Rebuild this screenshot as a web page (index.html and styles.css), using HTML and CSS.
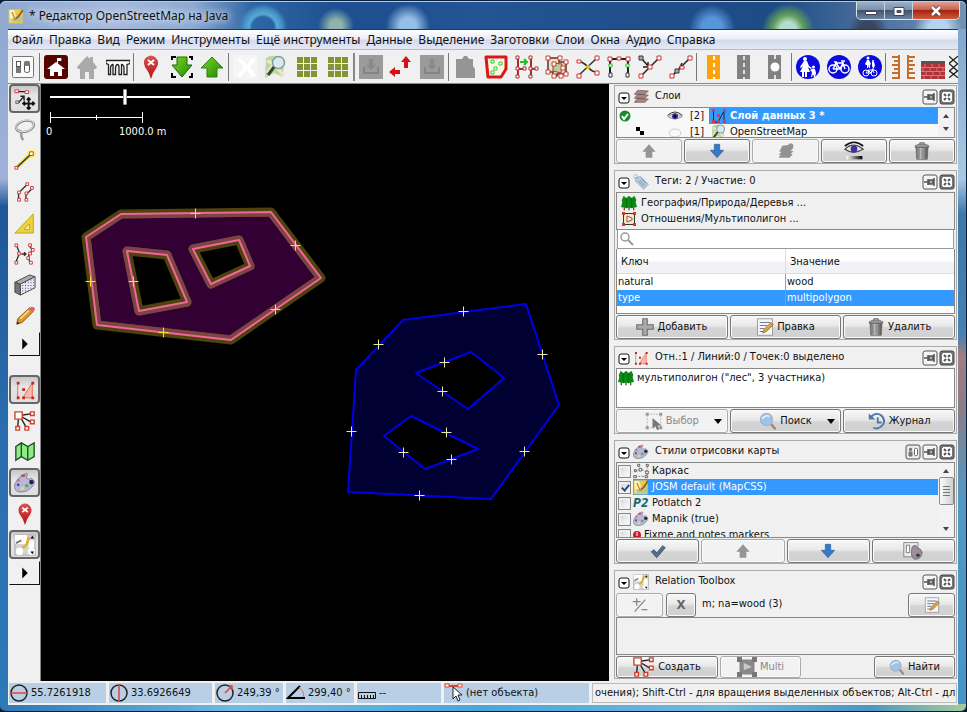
FILE: index.html
```html
<!DOCTYPE html>
<html lang="ru">
<head>
<meta charset="utf-8">
<title>Редактор OpenStreetMap на Java</title>
<link rel="stylesheet" href="styles.css">
</head>
<body>
<svg class="defs" aria-hidden="true">
  <defs>
    <linearGradient id="gGreen" x1="0" y1="0" x2="1" y2="1"><stop offset="0" stop-color="#7fd42a"/><stop offset="1" stop-color="#1f8a00"/></linearGradient>
    <linearGradient id="gRed" x1="0" y1="0" x2="0" y2="1"><stop offset="0" stop-color="#d85252"/><stop offset="1" stop-color="#b81414"/></linearGradient>
    <linearGradient id="gGray" x1="0" y1="0" x2="1" y2="0"><stop offset="0" stop-color="#666"/><stop offset=".4" stop-color="#c4c4c4"/><stop offset="1" stop-color="#4c4c4c"/></linearGradient>
    <linearGradient id="gFade" x1="0" y1="0" x2="1" y2="0"><stop offset="0" stop-color="#fff"/><stop offset="1" stop-color="#000"/></linearGradient>
    <pattern id="dots" width="3" height="3" patternUnits="userSpaceOnUse"><rect width="3" height="3" fill="#e6e8f6"/><rect width="1" height="1" fill="#33375c"/></pattern>
  </defs>
  <symbol id="prefs" viewBox="0 0 24 24"><rect x="1.500" y="1.500" width="21" height="21" rx="1" fill="#fafafa" stroke="#777"/><rect x="5.500" y="6.500" width="4" height="5" fill="#fff" stroke="#555"/><rect x="5" y="12" width="5" height="6" fill="#777"/><rect x="13.500" y="6.500" width="5" height="11" rx="2" fill="#fff" stroke="#555"/><rect x="13" y="6" width="6" height="5" rx="2" fill="#777"/></symbol>
  <symbol id="home" viewBox="0 0 24 24"><rect width="24" height="24" rx="3" fill="#560400"/><path d="M3 14 12 7l9 7h-3v7h-4v-4h-4v4H6v-7z" fill="#fff"/><path d="M13.500 9V3M14 3.500h3v2h-3z" fill="#fff" stroke="#fff"/></symbol>
  <symbol id="house" viewBox="0 0 24 24"><path d="m2 12 10-11 3 3V2h3v5l4 5-1 2h-2v10h-5v-7h-4v7H5V14H3z" fill="#aaa"/></symbol>
  <symbol id="bridge" viewBox="0 0 24 24"><path d="M0 5.500h24v3l-3 1v10h-3v-7q-.500-3-2.500-3v10h-2.500v-7q0-3-1.500-3T9.500 12.500v7H7v-10q-2 0-2.500 3v7h-2v-10L0 8.500z" fill="#fff" stroke="#222" stroke-width="1.300"/></symbol>
  <symbol id="pin" viewBox="0 0 24 24"><path d="M12 24Q10 17 6 12Q3 5 8 2q4-3 8 0 5 4 2 10-4 5-6 12z" fill="url(#gRed)"/><path d="m9 5 6 5m0-5-6 5" stroke="#fff" stroke-width="2"/></symbol>
  <symbol id="download" viewBox="0 0 24 24"><path d="M7 2h10v8h5L12 22 2 10h5z" fill="url(#gGreen)" stroke="#1d6b08"/><path d="M2 5V2h4M19 2h3v3M2 18v4h4M19 22h3v-4" fill="none" stroke="#000" stroke-width="2"/></symbol>
  <symbol id="upload" viewBox="0 0 24 24"><path d="M7 22h10v-9h6L12 2 1 13h6z" fill="url(#gGreen)" stroke="#2b8010"/></symbol>
  <symbol id="nox" viewBox="0 0 24 24"><rect width="24" height="24" fill="#f5f5f5"/><path d="m3 4 7 1 4 5 5-7 4 1-6 8 6 9-4 1-6-7-5 7-5-1 8-9z" fill="#fff"/></symbol>
  <symbol id="mapsearch" viewBox="0 0 24 24"><path d="M2 3q6-4 13-1l5 3-1 17-9-4-9 5z" fill="#b9d8a5"/><path d="M3 18 10 9l10 12M3 6l8 3" stroke="#f4e6bf" stroke-width="3" fill="none"/><circle cx="14.500" cy="7.500" r="6" fill="#dcefff" fill-opacity=".8" stroke="#839aa2" stroke-width="1.500"/><path d="m10 12-6 8" stroke="#3d462f" stroke-width="3"/></symbol>
  <symbol id="grid" viewBox="0 0 24 24"><path d="M2 2h6v6H2zm7 0h6v6H9zm7 0h6v6h-6zM2 9h6v6H2zm7 0h6v6H9zm7 0h6v6h-6zM2 16h6v6H2zm7 0h6v6H9zm7 0h6v6h-6z" fill="#839431"/></symbol>
  <symbol id="disk" viewBox="0 0 24 24"><rect width="24" height="24" fill="#9b9b9b"/><path d="M10 4h4v6h3l-5 5-5-5h3z" fill="#8a8a8a"/><path d="M5 12v6h14v-6" fill="none" stroke="#858585" stroke-width="2"/></symbol>
  <symbol id="updown" viewBox="0 0 24 24"><path d="m0 17 6-5v3h5v4H6v3zM17 1l5 6h-3v6h-4V7h-3z" fill="#d41118"/></symbol>
  <symbol id="paste" viewBox="0 0 24 24"><path d="M3 4h6l2-3h3l2 3h4v7l2 3v9H3z" fill="#959595"/></symbol>
  <symbol id="area" viewBox="0 0 24 24"><path d="M2 2h20v12l-5 8H4z" fill="#fff6e8" stroke="#dc1717" stroke-width="3" stroke-linejoin="round"/><path d="M7 5h3v3H7zm8 2h3v3h-3zm-5 5h3v3h-3zm-3 4h3v3H7z" fill="#fff" stroke="#22d322"/></symbol>
  <symbol id="split" viewBox="0 0 24 24"><path d="M3 3v18M16 3v18M3 14h7M16 14h6" stroke="#b32626" stroke-width="2"/><path d="M5 7h7m-3-3 3 3-3 3" stroke="#27bf27" fill="none" stroke-width="2"/><path d="M1 1h3v3H1zm13 0h3v3h-3zM1 12h3v3H1zm7 0h3v3H8zm6 0h3v3h-3zm6 0h3v3h-3zM1 20h3v3H1zm13 0h3v3h-3z" fill="#fff" stroke="#a33"/></symbol>
  <symbol id="multi" viewBox="0 0 24 24"><path d="M3 3h11v4h7v12h-9v2H8v-4H3z" fill="#efe0cc" stroke="#56352a" stroke-width="1.500"/><path d="m8 8 9 1-1 9-8-2z" fill="#b9cf9e" stroke="#b7301d"/><path d="M1 1h4v4H1zm12 0h4v4h-4zm6 4h4v4h-4zM1 15h4v4H1zm6-8h4v4H7zm9 4h4v4h-4zm3 6h4v4h-4zM7 19h4v4H7zm7 0h4v4h-4z" fill="#fff" stroke="#c4412e"/></symbol>
  <symbol id="mp" viewBox="0 0 16 16"><rect x="2.500" y="2.500" width="11" height="11" fill="#f5e6c8" stroke="#333"/><path d="M6 5v6l5-2V7z" fill="#f1f1e6" stroke="#a5503c"/><path d="M1 1h3v3H1zm11 0h3v3h-3zM1 12h3v3H1zm11 0h3v3h-3z" fill="#c4412e"/></symbol>
  <symbol id="cross" viewBox="0 0 24 24"><path d="M3 6q7 3 10 7t8 4M3 20l18-17" stroke="#333" fill="none" stroke-width="1.500"/><path d="M1 5h4v3H1zm18-4h4v4h-4zM1 19h4v4H1zm18-3h4v4h-4z" fill="#fff" stroke="#c33"/><circle cx="12" cy="12" r="2" fill="#f4bc13"/></symbol>
  <symbol id="ortho" viewBox="0 0 24 24"><path d="M3 19V4h18v15" stroke="#222" fill="none" stroke-width="2"/><path d="M1 2h4v4H1zm9 0h4v3h-4zm9 0h4v4h-4z" fill="#fff" stroke="#c33"/><path d="M2 9h3v3H2zm17 0h3v3h-3z" fill="#fff" stroke="#28b828"/><path d="M2 18h3v4H2zm17 0h3v4h-3z" fill="#fff" stroke="#333"/></symbol>
  <symbol id="joinpt" viewBox="0 0 24 24"><path d="M3 21 21 3M4 4l6 7m0-4v5H5" stroke="#222" fill="none" stroke-width="1.500"/><path d="M1 19h4v4H1zM19 1h4v4h-4zm-9 9h4v4h-4z" fill="#fff" stroke="#c33"/><path d="M1 1h4v4H1z" fill="#aaa" stroke="#333"/></symbol>
  <symbol id="onway" viewBox="0 0 24 24"><path d="M3 21 21 3M13 8l-3 6" stroke="#222" fill="none" stroke-width="1.500"/><path d="M1 19h4v4H1zM19 1h4v4h-4zM11 11h4v3h-4z" fill="#fff" stroke="#c33"/><path d="M6 14h4v4H6z" fill="#aaa" stroke="#333"/></symbol>
  <symbol id="road1" viewBox="0 0 24 24"><path d="M5 0h13v24H5z" fill="#ffa10b"/><path d="M12 1v4m0 3v4m0 3v4m0 3v2" stroke="#fff" stroke-width="2"/></symbol>
  <symbol id="road2" viewBox="0 0 24 24"><path d="M5 0h13v24H5z" fill="#818181"/><path d="M12 1v4m0 3v4m0 3v4m0 3v2" stroke="#fff" stroke-width="1.500"/></symbol>
  <symbol id="road3" viewBox="0 0 24 24"><path d="M5 0h13v24H5z" fill="#818181"/><path d="M12 0v4m0 16v4" stroke="#fff" stroke-width="1.500"/><circle cx="12" cy="12" r="4.500" fill="#fff"/></symbol>
  <symbol id="walk" viewBox="0 0 24 24"><circle cx="12" cy="12" r="12" fill="#0b0be0"/><circle cx="9" cy="4" r="2" fill="#fff"/><path d="M8 6h3l2 5 3 2-1 1-3-2 2 5h-3v5H9v-5H8v5H6v-5H4l3-6-2 2-1-1z" fill="#fff"/><circle cx="17.500" cy="12" r="1.500" fill="#fff"/><path d="M16 14h3l1 4-1 4h-1l-1-3-1 3h-1l1-5-2-2z" fill="#fff"/></symbol>
  <symbol id="bike" viewBox="0 0 24 24"><circle cx="12" cy="12" r="12" fill="#0b0be0"/><g fill="none" stroke="#fff" stroke-width="1.500"><circle cx="6" cy="14" r="4"/><circle cx="18" cy="14" r="4"/><path d="m6 14 3-6 4 6H6m7 0 3-6H9M7 7h3m8 7-3-8h3"/></g></symbol>
  <symbol id="bikewalk" viewBox="0 0 24 24"><circle cx="12" cy="12" r="12" fill="#0b0be0"/><g fill="#fff"><circle cx="10" cy="3" r="1.500"/><path d="M9 5h2l2 4-1 1v3h-1v-3l-1 3H9v-3H8l-1-1z"/><circle cx="15" cy="6" r="1"/><path d="M14 7h2l1 3-1 3h-1l-1-2z"/></g><g fill="none" stroke="#fff"><circle cx="8" cy="18" r="3"/><circle cx="16" cy="18" r="3"/><path d="m8 18 2-3 3 3H8m5 0 2-3h-5m6 3-2-4h2"/></g></symbol>
  <symbol id="rail" viewBox="0 0 24 24"><path d="M8 0v24M1 2h7M3 6h5M1 10h7M3 14h5M1 18h7M1 23h7M17 0v24M17 2h7M17 6h5M17 10h7M17 14h5M17 18h7M17 23h7" stroke="#c76d2a" stroke-width="2"/></symbol>
  <symbol id="brick" viewBox="0 0 24 24"><path d="M0 7h24v17H0z" fill="#b33139"/><path d="M0 6h24v3H0z" fill="#555"/><path d="M0 12.500h24M0 16.500h24M0 20.500h24M4 9v4m7-4v4m7-4v4M2 13v4m7-4v4m7-4v4m6-4v4M5 17v4m7-4v4m7-4v4M3 21v3m7-3v3m7-3v3" stroke="#ce7d78"/></symbol>
  <symbol id="fence" viewBox="0 0 10 24"><path d="m0 0 10 9M0 8l10 9M0 16l10 8M10 0 0 8m10 0L0 17m10-1L0 24" stroke="#222" stroke-width="1.500"/></symbol>

  <symbol id="select" viewBox="0 0 24 24"><path d="M3 4h10M5 16l6-7m0 5V9H7" stroke="#222" stroke-width="1.500" fill="none"/><path d="M1 2h4v3H1zm11 1h4v3h-4z" fill="#fff" stroke="#c33"/><path d="M2 14h3v3H2z" fill="#ccc" stroke="#666"/><path d="M16 11v12M10 17h12m-8-4 2-2 2 2m-4 8 2 2 2-2m-6-6-2 2 2 2m8-4 2 2-2 2" fill="none" stroke="#111" stroke-width="2"/></symbol>
  <symbol id="lasso" viewBox="0 0 24 24"><ellipse cx="12" cy="8" rx="10" ry="6" fill="none" stroke="#888" stroke-width="2.500" transform="rotate(-14 12 8)"/><path d="M3 12q6 1 5 4t2 7" fill="none" stroke="#999" stroke-width="2.500"/><ellipse cx="12" cy="7.500" rx="10" ry="6" fill="none" stroke="#ddd" transform="rotate(-14 12 8)"/></symbol>
  <symbol id="draw" viewBox="0 0 24 24"><circle cx="19" cy="4" r="5" fill="#fff36a"/><path d="M3 19 19 4" stroke="#ead84b" stroke-width="4"/><path d="M3 19 19 4" stroke="#333" stroke-width="1.500"/><path d="M1 18h3v3H1zM17 2h4v4h-4z" fill="#fff" stroke="#c33"/></symbol>
  <symbol id="parallel" viewBox="0 0 24 24"><path d="M5 21v-8l9-9M13 21v-6l6-6" stroke="#333" stroke-width="1.500" fill="none"/><path d="M4 19h3v3H4zm0-8h3v3H4zm9-9h3v3h-3zm-1 17h3v3h-3zm0-7h3v3h-3zm6-6h3v3h-3z" fill="#fff" stroke="#c33"/></symbol>
  <symbol id="angle" viewBox="0 0 24 24"><path d="M21 2v21H1z" fill="#ecd23b" stroke="#bda219"/><path d="M17 13v6h-6z" fill="#f7f3d8" stroke="#bda219"/></symbol>
  <symbol id="improve" viewBox="0 0 24 24"><path d="M3 3l3 8-4 10M17 3l3 5-4 5 1 8M8 12h5m-2-2 2 2-2 2" stroke="#333" stroke-width="1.500" fill="none"/><path d="M1 1h3v3H1zm3 9h3v3H4zM1 20h3v3H1zM16 1h3v3h-3zm3 5h3v3h-3zm-3 4h3v3h-3zm-2 5h3v3h-3zm3 5h3v3h-3z" fill="#fff" stroke="#c33"/></symbol>
  <symbol id="extrude" viewBox="0 0 24 24"><path d="m1 9 16-8 6 2-16 8z" fill="#aaa" stroke="#444"/><path d="m1 9 6 3v11l-6-3z" fill="#747474" stroke="#444"/><path d="m7 11 16-8v12L7 23z" fill="url(#dots)" stroke="#444"/></symbol>
  <symbol id="pencil" viewBox="0 0 24 24"><path d="m3 21 1-6L17 3l4 4L9 19z" fill="#dc9a2e" stroke="#865510"/><path d="m16 4 3-2q4 0 4 3l-3 3z" fill="#d66"/><path d="m7 15 9-9" stroke="#f5cf77" stroke-width="2"/><path d="m3 21 1-3 2 2z" fill="#222"/></symbol>
  <symbol id="triangle" viewBox="0 0 24 24"><path d="m9 6 6 6-6 6z"/></symbol>
  <symbol id="data" viewBox="0 0 24 24"><path d="M10 20 20 4v17z" fill="#f3b9b5"/><path d="M4 4v17M10 20 20 4v17z" stroke="#e5674d" fill="none"/><path d="M3 3h3v3H3zm0 16h3v3H3zM9 10h3v3H9zm0 9h3v3H9zM19 3h3v3h-3zm0 16h3v3h-3z" fill="#c42a1a"/></symbol>
  <symbol id="datalayer" viewBox="0 0 16 16"><path d="M2.500 2v12H7l6-11v11" stroke="#223" fill="none"/><path d="M1 1h3v3H1zm0 11h3v3H1zm5-6h3v3H6zm0 6h3v3H6zm6-11h3v3h-3zm0 11h3v3h-3z" fill="#c8404e"/></symbol>
  <symbol id="relation" viewBox="0 0 24 24"><path d="M6 6 20 4M6 6l14 8M6 6l8 14M5 6 4 20" stroke="#222" stroke-width="1.500"/><path d="M1 2h8v8H1zm17 0h4v4h-4zm0 9h4v4h-4zM2 18h4v4H2zm10 0h4v4h-4z" fill="#fff" stroke="#d2402c" stroke-width="1.500"/></symbol>
  <symbol id="map" viewBox="0 0 24 24"><path d="m2 6 6-4 7 4 7-4v15l-7 4-7-4-6 4z" fill="#8cec85" stroke="#234c27" stroke-width="1.500"/><path d="M8 2v15m7-11v15" stroke="#234c27" stroke-width="1.500"/></symbol>
  <symbol id="palette" viewBox="0 0 24 24"><path d="M10 3q7-4 4 2-2 4 5 2 6 3 1 9-5 6-12 6-9 0-7-9Q3 7 10 3z" fill="#b9b7d6" stroke="#84819e"/><ellipse cx="10" cy="4" rx="2.500" ry="1.500" fill="#b95363"/><circle cx="5" cy="9" r="1.500" fill="#d3726a"/><circle cx="19" cy="11" r="2.500" fill="#26264a"/><circle cx="4.500" cy="14" r="1.500" fill="#4037d2"/><circle cx="9" cy="18" r="2" fill="#e3de65"/><circle cx="14" cy="15" r="2" fill="#55ad52"/></symbol>
  <symbol id="josm" viewBox="0 0 24 24"><rect x="1" y="2" width="21" height="21" fill="#eccb52"/><path d="M2 3h7l3 9-9 9z" fill="#fdf2b8"/><path d="m2 17 8 4h11V11z" fill="#b9c88f"/><path d="m6 6 5 12" stroke="#c68c20" stroke-width="2"/><path d="m11 18 3-8 7-8 2 2-6 9z" fill="#7c5420"/><path d="m13 13 7-10" stroke="#f1bb3a" stroke-width="2"/></symbol>
  <symbol id="toolbox" viewBox="0 0 24 24"><rect x="1" y="1" width="22" height="22" fill="#d4d4d4" stroke="#aaa"/><path d="M1 1h13v10H1zM16 7h6v8h-6z" fill="#fff"/><circle cx="6" cy="19" r="4" fill="#fff"/><circle cx="19" cy="19" r="4" fill="#fff"/><path d="m8 14 4-2 3-9h3l-3 9-4 4z" fill="#e5ad22"/><path d="m2 10 6-3" stroke="#777" stroke-width="2"/><path d="m18 5 2-3 2 3zm0 14 2 3 2-3z"/></symbol>

  <symbol id="tiles" viewBox="0 0 24 24"><path d="m7 2 16 1-5 5H2zm0 6 16 1-5 5H2zm0 6 16 1-5 5H2z" fill="#aa8484" stroke="#695353"/></symbol>
  <symbol id="tag" viewBox="0 0 24 24"><path d="m4 5 8-1 11 12-7 7L4 11z" fill="#b5cddf" stroke="#83a0b5"/><path d="m10 9 8 8m-10-6 8 8m-3-12 7 7" stroke="#5e7d99"/><circle cx="4" cy="4" r="3" fill="none" stroke="#98abb9"/></symbol>
  <symbol id="forest" viewBox="0 0 24 24"><path d="M5 19v4m7-4v4m7-4v4" stroke="#6a4b1a" stroke-width="2"/><path d="M4 1 1 8l1 3-2 7 8 2 4-1 4 1 8-2-2-7 1-4-3-6-4 4-4-4-4 4z" fill="#0a8a14"/><path d="M8 4v14m8-14v14" stroke="#07590b"/></symbol>
  <symbol id="eye" viewBox="0 0 24 24"><path d="M1 13Q11 4 23 13 11 20 1 13z" fill="#d3cfd8" stroke="#857c89"/><circle cx="12" cy="12.500" r="4.500" fill="#3c3499"/><circle cx="12" cy="12.500" r="2"/><path d="M1 11Q12 1 23 11" fill="none" stroke="#333" stroke-width="1.500"/></symbol>
  <symbol id="eyefade" viewBox="0 0 24 24"><path d="M1 10Q11 0 23 10 11 17 1 10z" fill="#e8e5ef" stroke="#444" stroke-width="1.500"/><circle cx="12" cy="9.500" r="4" fill="#3c3499"/><path d="M1 6Q12-3 23 6" fill="none" stroke="#111" stroke-width="2"/><path d="M3 18h19v4H3z" fill="url(#gFade)"/></symbol>
  <symbol id="up" viewBox="0 0 24 24"><path d="M7 22h10v-9h5L12 2 2 13h5z" fill="#959595"/></symbol>
  <symbol id="down" viewBox="0 0 24 24"><path d="M8 2h8v9h6L12 22 2 11h6z" fill="#3978c4" stroke="#285d9e"/></symbol>
  <symbol id="merge" viewBox="0 0 24 24"><path d="m7 5 8-1q3-5 7 0l-1 5-3 3h4l-4 4h3l-4 5H2l3-4H2l4-4H3z" fill="#929292"/></symbol>
  <symbol id="trash" viewBox="0 0 24 24"><path d="M4 7h16l-1 16H5z" fill="url(#gGray)" stroke="#666"/><path d="M3 5q9-5 18 0v2H3z" fill="#9b9b9b" stroke="#555"/><path d="M8 9v12m4-12v12m4-12v12" stroke="#707070"/><path d="M9 3V1h6v2" fill="none" stroke="#444"/></symbol>
  <symbol id="plus" viewBox="0 0 24 24"><path d="M9 1h6v8h8v6h-8v8H9v-8H1V9h8z" fill="#aaa" stroke="#707070" stroke-width="1.500"/></symbol>
  <symbol id="edit" viewBox="0 0 24 24"><path d="M2 1h20v22H2z" fill="#f5f6f8" stroke="#858585"/><path d="M5 6h14M5 10h10M5 14h6M5 18h5" stroke="#6e7f98" stroke-width="1.500"/><path d="m9 20 2-5 9-9 3 3-9 9z" fill="#dda242" stroke="#8f6424"/></symbol>
  <symbol id="arrowsel" viewBox="0 0 24 24"><path d="M3 3h18v18H3z" fill="none" stroke="#999" stroke-dasharray="2 2"/><path d="M1 1h4v4H1zm18 0h4v4h-4zM1 19h4v4H1zm18 0h4v4h-4z" fill="#999"/><path d="M10 8v14l4-3 2 5 3-1-2-5h5z" fill="#777"/></symbol>
  <symbol id="find" viewBox="0 0 24 24"><path d="m16 16 6 7" stroke="#9a8173" stroke-width="3"/><circle cx="10" cy="10" r="8" fill="#9bc4ef" stroke="#a9b4c6" stroke-width="2"/><path d="M4 9q5-6 10-3" stroke="#e5f3ff" stroke-width="2" fill="none"/></symbol>
  <symbol id="history" viewBox="0 0 24 24"><path d="M4 7q5-7 13-3 7 6 3 13-6 7-13 4" fill="none" stroke="#4d77ad" stroke-width="2.500"/><path d="M1 2v8h9z" fill="#4d77ad"/><path d="M13 7v7h5" fill="none" stroke="#4d77ad" stroke-width="2.500"/></symbol>
  <symbol id="wire" viewBox="0 0 24 24"><path d="M3 20h18V3M4 12l8-3 9 5" fill="none" stroke="#555" stroke-dasharray="3 2"/><path d="M2 10h3v3H2zm7-2h4v4H9zm11-6h3v3h-3zm-1 10h4v4h-4zM1 19h4v3H1zm17 0h4v3h-4zM7 2h3v3H7z" fill="#fff" stroke="#222"/></symbol>
  <symbol id="check" viewBox="0 0 24 24"><path d="m2 13 4-3 4 5L19 4l4 3-13 15z" fill="#52708f" stroke="#26394d"/></symbol>
  <symbol id="stylepref" viewBox="0 0 24 24"><rect x="1" y="2" width="17" height="17" fill="#eee" stroke="#777"/><path d="M4 5h4v9H4z" fill="#fff" stroke="#666"/><path d="M11 7q5-4 6 1 5 1 6 6-1 8-9 8-6-3-3-15z" fill="#98919d" stroke="#6c6672"/><circle cx="14" cy="10" r="1.500" fill="#d77"/><circle cx="18" cy="17" r="2" fill="#333"/></symbol>
  <symbol id="plusminus" viewBox="0 0 24 24"><path d="M7 2v11M1 7h12M4 22 20 4M14 19h9" stroke="#888" stroke-width="2"/></symbol>
  <symbol id="multigray" viewBox="0 0 24 24"><path d="M3 3h18v18H3z" fill="#888"/><path d="M0 0h6v6H0zm18 0h6v6h-6zM0 18h6v6H0zm18 0h6v6h-6z" fill="#777"/><path d="m8 7 10 5-10 4z" fill="#c9c9c9"/></symbol>
  <symbol id="prefwin" viewBox="0 0 16 16"><rect x="1" y="1" width="14" height="14" rx="2" fill="#e8e8e8" stroke="#555"/><path d="M4.500 4.500h2v2h-2zM4 8h3v4H4z" fill="#777" stroke="#777"/><rect x="9.500" y="4.500" width="3" height="7" rx="1" fill="#fff" stroke="#666"/></symbol>
  <symbol id="pinwin" viewBox="0 0 16 16"><rect x="1" y="1" width="14" height="14" rx="2" fill="#f5f5f5" stroke="#555"/><path d="M2 8h4M6 5v6M7 6h4v4H7zM12 4v8" stroke="#555" stroke-width="1.500" fill="#aaa"/></symbol>
  <symbol id="closewin" viewBox="0 0 16 16"><rect x="1" y="1" width="14" height="14" rx="2" fill="#777" stroke="#444"/><path d="M4 3h8v10H4zM3 4h10v8H3z" fill="#fff"/><path d="m5 5 2 2m4-2L9 7m2 4L9 9m-4 2 2-2" stroke="#555" stroke-width="2"/></symbol>
  <symbol id="fold" viewBox="0 0 12 12"><rect x="1" y="1" width="10" height="10" rx="2" fill="#fff" stroke="#111"/><path d="M3 5h6L6 8z"/></symbol>
  <symbol id="lat" viewBox="0 0 20 20"><circle cx="10" cy="10" r="8" fill="none" stroke="#222" stroke-width="1.500"/><path d="M1 10h18" stroke="#e2433b" stroke-width="1.500"/></symbol>
  <symbol id="lon" viewBox="0 0 20 20"><circle cx="10" cy="10" r="8" fill="none" stroke="#222" stroke-width="1.500"/><path d="M10 1v18" stroke="#e2433b" stroke-width="1.500"/></symbol>
  <symbol id="heading" viewBox="0 0 20 20"><circle cx="10" cy="10" r="8" fill="none" stroke="#222" stroke-width="1.500"/><path d="m10 10 7-7m-3 0h3v4" stroke="#e2433b" stroke-width="1.500" fill="none"/></symbol>
  <symbol id="ang" viewBox="0 0 20 20"><path d="M14 3 2 15h17" fill="none" stroke="#000" stroke-width="2"/><path d="M13 4q5 4 5 10" fill="none" stroke="#e26b66"/></symbol>
  <symbol id="ruler" viewBox="0 0 20 20"><path d="M1.500 9.500h17v6h-17zM4.500 12v3m3-3v3m3-3v3m3-3v3m3-3v3" fill="none" stroke="#111"/></symbol>
  <symbol id="cursor" viewBox="0 0 20 20"><path d="M3 3h13" stroke="#d4472c" stroke-width="2"/><path d="M1 1h4v3H1zm13 0h4v3h-4z" fill="#fff" stroke="#d4472c"/><path d="M9 4v12l3-3 2 5 2-1-2-5h4z" fill="#fff" stroke="#222"/></symbol>
</svg>

<div class="window">
  <header class="titlebar">
    <svg class="i16"><use href="#josm"/></svg>
    <h1>* Редактор OpenStreetMap на Java</h1>
    <div class="winbtns">
      <button aria-label="Свернуть"><svg viewBox="0 0 16 12"><path d="M2.500 6.500h11v3h-11z" fill="#fff" stroke="#445"/></svg></button>
      <button aria-label="Развернуть"><svg viewBox="0 0 16 12"><path d="M3 2.500h10v8H3z" fill="#fff" stroke="#445"/><path d="M6 5.500h4v2H6z" fill="#567" stroke="#445"/></svg></button>
      <button class="close" aria-label="Закрыть"><svg viewBox="0 0 16 12"><path d="m4 2 8 8m0-8-8 8" stroke="#533" stroke-width="4"/><path d="m4 2 8 8m0-8-8 8" stroke="#fff" stroke-width="2.500"/></svg></button>
    </div>
  </header>
  <div class="client">
    <nav class="menu">
      <button>Файл</button><button>Правка</button><button>Вид</button><button>Режим</button><button>Инструменты</button><button>Ещё инструменты</button><button>Данные</button><button>Выделение</button><button>Заготовки</button><button>Слои</button><button>Окна</button><button>Аудио</button><button>Справка</button>
    </nav>
    <div class="toolbar">
      <button aria-label="Настройки"><svg><use href="#prefs"/></svg></button><i></i>
      <button aria-label="Дом"><svg><use href="#home"/></svg></button>
      <button aria-label="Здание"><svg><use href="#house"/></svg></button>
      <button aria-label="Мост"><svg><use href="#bridge"/></svg></button><i></i>
      <button aria-label="Ошибка"><svg><use href="#pin"/></svg></button>
      <button aria-label="Загрузить"><svg><use href="#download"/></svg></button>
      <button aria-label="Отправить"><svg><use href="#upload"/></svg></button><i></i>
      <button aria-label="Очистить"><svg><use href="#nox"/></svg></button>
      <button aria-label="Карта"><svg><use href="#mapsearch"/></svg></button>
      <button aria-label="Сетка"><svg><use href="#grid"/></svg></button>
      <button aria-label="Сетка 2"><svg><use href="#grid"/></svg></button><i class="thick"></i>
      <button aria-label="Сохранить"><svg><use href="#disk"/></svg></button>
      <button aria-label="Обновить"><svg><use href="#updown"/></svg></button>
      <button aria-label="Сохранить как"><svg><use href="#disk"/></svg></button><i></i>
      <button aria-label="Вставить"><svg><use href="#paste"/></svg></button>
      <button aria-label="Область"><svg><use href="#area"/></svg></button>
      <button aria-label="Разделить"><svg><use href="#split"/></svg></button>
      <button aria-label="Мультиполигон"><svg><use href="#multi"/></svg></button>
      <button aria-label="Пересечение"><svg><use href="#cross"/></svg></button>
      <button aria-label="Выпрямить"><svg><use href="#ortho"/></svg></button>
      <button aria-label="Присоединить"><svg><use href="#joinpt"/></svg></button>
      <button aria-label="На линию"><svg><use href="#onway"/></svg></button><i></i>
      <button aria-label="Дорога"><svg><use href="#road1"/></svg></button>
      <button aria-label="Улица"><svg><use href="#road2"/></svg></button>
      <button aria-label="Разворот"><svg><use href="#road3"/></svg></button><i></i>
      <button aria-label="Пешеходы"><svg><use href="#walk"/></svg></button>
      <button aria-label="Велосипед"><svg><use href="#bike"/></svg></button>
      <button aria-label="Совмещённая"><svg><use href="#bikewalk"/></svg></button><i></i>
      <button aria-label="Ограждение"><svg><use href="#rail"/></svg></button>
      <button aria-label="Стена"><svg><use href="#brick"/></svg></button>
      <svg class="more"><use href="#fence"/></svg>
    </div>
    <main>
      <aside class="modes">
        <button class="on" aria-label="Выбор"><svg><use href="#select"/></svg></button>
        <button aria-label="Лассо"><svg><use href="#lasso"/></svg></button>
        <button aria-label="Рисовать"><svg><use href="#draw"/></svg></button>
        <button aria-label="Параллель"><svg><use href="#parallel"/></svg></button>
        <button aria-label="Угол"><svg><use href="#angle"/></svg></button>
        <button aria-label="Улучшить"><svg><use href="#improve"/></svg></button>
        <button aria-label="Выдавить"><svg><use href="#extrude"/></svg></button>
        <button aria-label="Карандаш"><svg><use href="#pencil"/></svg></button>
        <button class="expand" aria-label="Ещё"><svg><use href="#triangle"/></svg></button>
        <button class="on" aria-label="Данные"><svg><use href="#data"/></svg></button>
        <button aria-label="Отношения"><svg><use href="#relation"/></svg></button>
        <button aria-label="Карты"><svg><use href="#map"/></svg></button>
        <button class="on" aria-label="Стили"><svg><use href="#palette"/></svg></button>
        <button aria-label="Ошибки"><svg><use href="#pin"/></svg></button>
        <button class="on" aria-label="Relation"><svg><use href="#toolbox"/></svg></button>
        <button class="expand" aria-label="Ещё панели"><svg><use href="#triangle"/></svg></button>
      </aside>
      <section class="map">
        <svg class="canvas">
          <defs>
            <clipPath id="wood"><path clip-rule="evenodd" d="M121 214 271 212 321 278 231 340 97 325 86 237zM127 251 167 255 187 302 139 311zM193 249 239 240 250 266 211 284z"/></clipPath>
            <path id="plus9" d="M-4.500.5h10M.5-4.500v10"/>
          </defs>
          <g transform="translate(-41 -84)">
            <g fill-rule="evenodd" stroke-linejoin="round">
              <path d="M121 214 271 212 321 278 231 340 97 325 86 237zM127 251 167 255 187 302 139 311zM193 249 239 240 250 266 211 284z" fill="#330033" stroke="#4e430c" stroke-width="9"/>
              <path clip-path="url(#wood)" d="M121 214 271 212 321 278 231 340 97 325 86 237zM127 251 167 255 187 302 139 311zM193 249 239 240 250 266 211 284z" fill="none" stroke="#7d4444" stroke-width="9"/>
              <path d="M121 214 271 212 321 278 231 340 97 325 86 237zM127 251 167 255 187 302 139 311zM193 249 239 240 250 266 211 284z" fill="none" stroke="#f0659a" stroke-width="2"/>
              <path d="M403 320 526 304 559 405 491 499 348 492 356 370zM416 373 471 352 504 378 468 409zM384 436 411 416 478 449 425 469z" fill="#000033" stroke="#0000e6" stroke-width="2"/>
            </g>
            <g stroke="#f4e52c">
              <use href="#plus9" x="195" y="213"/><use href="#plus9" x="295" y="245"/><use href="#plus9" x="275" y="309"/><use href="#plus9" x="163" y="332"/><use href="#plus9" x="90" y="281"/><use href="#plus9" x="133" y="281"/>
            </g>
            <g stroke="#e9e9a0">
              <use href="#plus9" x="463" y="311"/><use href="#plus9" x="542" y="354"/><use href="#plus9" x="378" y="344"/><use href="#plus9" x="351" y="431"/><use href="#plus9" x="524" y="451"/><use href="#plus9" x="419" y="495"/><use href="#plus9" x="444" y="362"/><use href="#plus9" x="442" y="391"/><use href="#plus9" x="446" y="432"/><use href="#plus9" x="403" y="452"/><use href="#plus9" x="451" y="459"/>
            </g>
            <path d="M50.500 112v11M142.500 112v11M96.500 115v5M50 117.500h92" stroke="#fff"/>
            <g class="maptext"><text x="46" y="135">0</text><text x="119" y="135">1000.0 m</text></g>
          </g>
        </svg>
        <input class="zoom" type="range" min="0" max="100" value="54" aria-label="Масштаб">
      </section>
      <aside class="panels">
        <section class="dlg">
          <header><svg class="fold"><use href="#fold"/></svg><svg class="i16"><use href="#tiles"/></svg><h2>Слои</h2><svg class="i16"><use href="#pinwin"/></svg><svg class="i16"><use href="#closewin"/></svg></header>
          <div class="box layers">
            <ul>
              <li><svg class="c1 i12" viewBox="0 0 12 12"><circle cx="6" cy="6" r="5.500" fill="#178a2c"/><path d="m3 6 2 3 4-5" stroke="#fff" stroke-width="2" fill="none"/></svg><svg class="i16"><use href="#eye"/></svg><span class="n">[2]</span><b class="sel"><svg class="i16"><use href="#datalayer"/></svg>Слой данных 3 *</b></li>
              <li><svg class="c2 i12" viewBox="0 0 12 12"><path d="M1 1h4v4H1zM5 5h4v4H5z"/></svg><svg class="i16" viewBox="0 0 16 16"><ellipse cx="8" cy="9" rx="6" ry="4" fill="none" stroke="#ccc"/></svg><span class="n">[1]</span><span class="lay"><svg class="i16"><use href="#mapsearch"/></svg>OpenStreetMap</span></li>
            </ul>
            <div class="scroll"><svg viewBox="0 0 8 5"><path d="m1 5 3-4 3 4z"/></svg><svg viewBox="0 0 8 5"><path d="m1 0 3 4 3-4z"/></svg></div>
          </div>
          <div class="row"><button disabled aria-label="Вверх"><svg class="i16"><use href="#up"/></svg></button><button aria-label="Вниз"><svg class="i16"><use href="#down"/></svg></button><button disabled aria-label="Объединить"><svg class="i18"><use href="#merge"/></svg></button><button aria-label="Видимость"><svg class="i20"><use href="#eyefade"/></svg></button><button aria-label="Удалить слой"><svg class="i18"><use href="#trash"/></svg></button></div>
        </section>

        <section class="dlg">
          <header><svg class="fold"><use href="#fold"/></svg><svg class="i16"><use href="#tag"/></svg><h2>Теги: 2 / Участие: 0</h2><svg class="i16"><use href="#pinwin"/></svg><svg class="i16"><use href="#closewin"/></svg></header>
          <div class="box presets">
            <a href="#geo"><svg class="i16"><use href="#forest"/></svg>География/Природа/Деревья ...</a>
            <a href="#rel"><svg class="i16"><use href="#mp"/></svg>Отношения/Мультиполигон ...</a>
          </div>
          <div class="search"><svg class="i16" viewBox="0 0 16 16"><circle cx="6" cy="6" r="4" fill="none" stroke="#999" stroke-width="1.500"/><path d="m9 9 5 5" stroke="#999" stroke-width="2"/></svg><input type="text" aria-label="Поиск тегов"></div>
          <div class="tags"><table>
            <thead><tr><th>Ключ</th><th>Значение</th></tr></thead>
            <tbody><tr><td>natural</td><td>wood</td></tr><tr class="sel"><td>type</td><td>multipolygon</td></tr></tbody>
          </table></div>
          <div class="row"><button><svg class="i18"><use href="#plus"/></svg>Добавить</button><button><svg class="i18"><use href="#edit"/></svg>Правка</button><button><svg class="i18"><use href="#trash"/></svg>Удалить</button></div>
        </section>

        <section class="dlg">
          <header><svg class="fold"><use href="#fold"/></svg><svg class="i16"><use href="#data"/></svg><h2>Отн.:1 / Линий:0 / Точек:0 выделено</h2><svg class="i16"><use href="#pinwin"/></svg><svg class="i16"><use href="#closewin"/></svg></header>
          <div class="box white selection"><svg class="i16"><use href="#forest"/></svg>мультиполигон ("лес", 3 участника)</div>
          <div class="row"><button class="drop" disabled><svg class="i18"><use href="#arrowsel"/></svg>Выбор<svg class="caret" viewBox="0 0 8 5"><path d="M0 0h8L4 5z"/></svg></button><button class="drop"><svg class="i18"><use href="#find"/></svg>Поиск<svg class="caret" viewBox="0 0 8 5"><path d="M0 0h8L4 5z"/></svg></button><button><svg class="i18"><use href="#history"/></svg>Журнал</button></div>
        </section>

        <section class="dlg">
          <header><svg class="fold"><use href="#fold"/></svg><svg class="i16"><use href="#palette"/></svg><h2>Стили отрисовки карты</h2><svg class="i16"><use href="#prefwin"/></svg><svg class="i16"><use href="#pinwin"/></svg><svg class="i16"><use href="#closewin"/></svg></header>
          <div class="box styles">
            <div class="stylelist">
              <label><input type="checkbox"><span><svg class="i16"><use href="#wire"/></svg>Каркас</span></label>
              <label><input type="checkbox" checked><span class="sel"><svg class="i16"><use href="#josm"/></svg>JOSM default (MapCSS)</span></label>
              <label><input type="checkbox"><span><em>P2</em>Potlatch 2</span></label>
              <label><input type="checkbox"><span><svg class="i16"><use href="#palette"/></svg>Mapnik (true)</span></label>
              <label><input type="checkbox"><span><svg class="i8" viewBox="0 0 8 8"><circle cx="4" cy="4" r="4" fill="#c3202a"/><path d="M4 1v4m0 1v1" stroke="#fff"/></svg>Fixme and notes markers</span></label>
            </div>
            <div class="scroll"><svg viewBox="0 0 8 5"><path d="m1 5 3-4 3 4z"/></svg><div class="thumb"></div><svg viewBox="0 0 8 5"><path d="m1 0 3 4 3-4z"/></svg></div>
          </div>
          <div class="row"><button aria-label="Включить"><svg class="i16"><use href="#check"/></svg></button><button disabled aria-label="Выше"><svg class="i16"><use href="#up"/></svg></button><button aria-label="Ниже"><svg class="i16"><use href="#down"/></svg></button><button aria-label="Настройка стилей"><svg class="i20"><use href="#stylepref"/></svg></button></div>
        </section>

        <section class="dlg">
          <header><svg class="fold"><use href="#fold"/></svg><svg class="i16"><use href="#toolbox"/></svg><h2>Relation Toolbox</h2><svg class="i16"><use href="#pinwin"/></svg><svg class="i16"><use href="#closewin"/></svg></header>
          <div class="row rel"><button class="w48" disabled aria-label="Добавить или убрать"><svg class="i16"><use href="#plusminus"/></svg></button><button class="w32 x">X</button><span>m; na=wood (3)</span><button class="w48" aria-label="Править отношение"><svg class="i16"><use href="#edit"/></svg></button></div>
          <div class="box relbox"></div>
          <div class="row foot"><button class="w102"><svg class="i22"><use href="#relation"/></svg>Создать</button><button class="w82" disabled><svg class="i20"><use href="#multigray"/></svg>Multi</button><button class="w82 last"><svg class="i16"><use href="#find"/></svg>Найти</button></div>
        </section>
      </aside>
    </main>
    <footer class="status">
      <div class="s-lat"><svg class="i20"><use href="#lat"/></svg>55.7261918</div>
      <div class="s-lon"><svg class="i20"><use href="#lon"/></svg>33.6926649</div>
      <div class="s-ang"><svg class="i20"><use href="#heading"/></svg>249,39 °</div>
      <div class="s-ang"><svg class="i20"><use href="#ang"/></svg>299,40 °</div>
      <div class="s-dist"><svg class="i20"><use href="#ruler"/></svg>--</div>
      <div class="s-obj"><svg class="i20"><use href="#cursor"/></svg>(нет объекта)</div>
      <p>очения); Shift-Ctrl - для вращения выделенных объектов; Alt-Ctrl - дл</p>
    </footer>
  </div>
</div>
</body>
</html>
```
FILE: styles.css
```css
* { box-sizing: border-box; }
body {
  margin: 0;
  font: 11px/16px "DejaVu Sans Condensed", "DejaVu Sans", sans-serif;
  color: #111;
  background: #0a1a30;
}
h1, h2, p, ul { margin: 0; padding: 0; font: inherit; }
button { font: inherit; color: inherit; border: 0; padding: 0; background: none; }
svg { display: block; flex: none; }
a { color: inherit; text-decoration: none; }
.defs { position: absolute; width: 0; height: 0; }
.i8 { width: 8px; height: 8px; }
.i12 { width: 12px; height: 12px; }
.i16 { width: 16px; height: 16px; }
.i18 { width: 18px; height: 18px; }
.i20 { width: 20px; height: 20px; }
.i22 { width: 22px; height: 22px; }

.window {
  display: flex;
  flex-direction: column;
  min-height: 100vh;
  padding: 0 8px 6px;
  border: 1px solid #09203c;
  border-width: 1px 1px 1px 0;
  border-radius: 6px;
  background:
    linear-gradient(90deg, #2d77b4, #71bbe5 25%, #4ba5da 50%, #70b9df 75%, #4798c4 90%, #a8c99b) bottom / 100% 7px no-repeat,
    linear-gradient(#8fa8d0, #9eb1da 25%, #1f5798 29%, #2a6cae 60%, #2d79b8) left / 8px 100% no-repeat,
    linear-gradient(#7aa1c9, #a9c8e2 25%, #3d78ac 30%, #4681b0 47%, #a17d82 50%, #8b7d87 57%, #5298c4 70%, #4396c8) right / 9px 100% no-repeat,
    #1c4a86;
}
.titlebar {
  display: flex;
  align-items: center;
  gap: 5px;
  height: 28px;
  margin: 0 -8px;
  padding-left: 8px;
  border-top: 1px solid #b5cae3;
  border-radius: 6px 6px 0 0;
  font: 12px/16px "Noto Sans", sans-serif;
  background:
    radial-gradient(circle at 263px 26px, transparent 11px, #58a9d6 14px, #4590c4 19px, transparent 24px),
    radial-gradient(circle at 336px 24px, #8fb3aa 6px, transparent 18px),
    radial-gradient(circle at 408px 24px, #96bfe8 8px, transparent 22px),
    radial-gradient(circle at 712px 26px, #5795db 10px, transparent 23px),
    radial-gradient(circle at 788px 28px, #b5ddcf 8px, #62a05a 15px, transparent 26px),
    radial-gradient(circle at 868px 28px, #38465e 8px, transparent 20px),
    radial-gradient(circle at 938px 28px, #b3d3ef 10px, transparent 24px),
    linear-gradient(90deg, #8fa9cf, #a6b9dc 12%, #8ea9d1 20%, #3167a6 26%, #1d4f91 35%, #235493 50%, #1d4b85 80%, #7592b3);
}
.titlebar h1 { flex: 1; text-shadow: 0 0 6px #dde8f8, 0 0 8px #dde8f8; }
.winbtns {
  display: flex;
  align-self: flex-start;
  height: 18px;
  margin-right: 6px;
  border: 1px solid #d9e3ee;
  border-top: 0;
  border-radius: 0 0 5px 5px;
  overflow: hidden;
}
.winbtns button {
  display: grid;
  place-items: center;
  width: 28px;
  border-right: 1px solid #c8d4e2;
  background: linear-gradient(#9cb0c6, #7c91ab 45%, #40566f 50%, #6b83a0);
}
.winbtns .close { width: 46px; border: 0; background: linear-gradient(#dfa093, #c9604d 45%, #a62311 50%, #cf5a39); }
.winbtns svg { width: 16px; height: 12px; }
.client {
  display: flex;
  flex: 1;
  flex-direction: column;
  background: #f0f0f0;
  border-top: 1px solid #23374f;
}
.menu {
  display: flex;
  gap: 6px;
  height: 20px;
  padding-left: 4px;
  font: 12px/20px "Noto Sans", sans-serif;
  background: linear-gradient(#fff, #e9edf7 45%, #d5dbed 55%, #e3e8f5);
  border-bottom: 1px solid #bbb;
}
.toolbar { display: flex; align-items: center; height: 34px; border-bottom: 1px solid #888; }
.toolbar button { flex: 1 1 0; display: grid; place-items: center; }
.toolbar button svg { width: 24px; height: 24px; }
.toolbar i { width: 2px; height: 28px; border-left: 1px solid #777; }
.toolbar .thick { border-left: 2px solid #888; }
.toolbar .more { width: 9px; height: 24px; }

main { display: flex; flex: 1; }
.modes { width: 33px; border-right: 1px solid #888; }
.modes button {
  display: grid;
  place-items: center;
  width: 31px;
  height: 29px;
  margin: 0 0 2px 1px;
  border: 1px solid transparent;
  border-radius: 4px;
}
.modes .on { border: 2px solid #666; background: linear-gradient(#c8c8c8, #e6e6e6 40%, #dedede); }
.modes svg { width: 22px; height: 22px; }
.modes .expand {
  height: 24px;
  margin-bottom: 19px;
  border-radius: 0;
  border-right-color: #111;
  border-bottom-color: #111;
}
.map { position: relative; flex: 1; min-width: 0; background: #000; }
.canvas { position: absolute; width: 100%; height: 100%; }
.maptext { fill: #fff; font-size: 11px; }
.zoom {
  position: absolute;
  left: 9px;
  top: 5px;
  width: 140px;
  height: 16px;
  margin: 0;
  appearance: none;
  background: linear-gradient(#fff, #fff) center / 100% 2px no-repeat;
}
.zoom::-webkit-slider-thumb { appearance: none; width: 4px; height: 16px; border: 1px solid #999; border-radius: 1px; background: #fff; }

.panels {
  display: flex;
  flex-direction: column;
  gap: 6px;
  flex: 0 0 349px;
  padding: 1px 1px 2px 5px;
}
.dlg { border: 1px solid #aaa; }
.dlg > header { display: flex; align-items: center; gap: 1px; height: 21px; padding: 0 1px 0 3px; }
.dlg h2 { flex: 1; padding: 0 0 2px 5px; white-space: nowrap; }
.fold { width: 12px; height: 12px; margin: 3px 2px 0 0; }
.box { margin: 0 1px; border: 1px solid #888; overflow: hidden; }
.white { background: #fff; }
.sel { background: #3399ff; color: #fff; }
.row { display: flex; gap: 2px; height: 24px; margin: 1px 1px 0; }
.row button {
  display: flex;
  flex: 1 1 0;
  align-items: center;
  justify-content: center;
  gap: 3px;
  border: 1px solid #777;
  border-radius: 3px;
  background: linear-gradient(#f8f8f8, #e8e8e8 45%, #d4d4d4 55%, #d0d0d0);
  box-shadow: inset 0 0 0 1px #fafafa;
}
.row button:disabled { border-color: #aaa; background: #f2f2f2; color: #888; }
.row .caret { width: 8px; height: 5px; color: #111; }
.drop { position: relative; }
.drop .caret { position: absolute; right: 5px; }

.layers { display: flex; height: 31px; background: #f8f8f8; }
.layers ul { flex: 1; list-style: none; }
.layers li { display: flex; height: 16px; align-items: center; }
.layers .c1 { margin: 0 36px 0 2px; }
.layers .c2 { margin: 0 20px 0 18px; }
.layers .n { width: 26px; padding-left: 7px; }
.layers b, .lay { display: flex; flex: 1; gap: 3px; padding-left: 2px; }
.scroll {
  display: flex;
  flex: 0 0 16px;
  flex-direction: column;
  justify-content: space-between;
  align-items: center;
  padding: 5px 0;
  background: #f2f2f2;
}
.scroll svg { width: 8px; height: 5px; fill: #444; }
.thumb {
  width: 15px;
  height: 28px;
  margin-bottom: 18px;
  border: 1px solid #888;
  border-radius: 2px;
  background:
    repeating-linear-gradient(#777 0 1px, transparent 1px 3px) center / 7px 10px no-repeat,
    linear-gradient(90deg, #fafafa, #cfcfcf);
}
.presets { height: 38px; padding: 2px 4px; }
.presets a { display: flex; gap: 4px; }
.search { display: flex; height: 19px; margin: 0 2px; border: 1px solid #999; border-width: 0 1px 1px; background: #fff; }
.search svg { margin: 1px; }
.search input { flex: 1; min-width: 0; border: 0; outline: 0; background: none; font: inherit; }
.tags { height: 65px; margin: 0 1px; border: 1px solid #888; border-top: 0; background: #fff; }
table { width: 100%; border-collapse: collapse; table-layout: fixed; }
th { height: 24px; padding: 2px 4px 0; font-weight: 400; text-align: left; background: linear-gradient(#fff 50%, #f1f2f5 55%); border-bottom: 1px solid #ddd; }
th + th { border-left: 1px solid #ddd; }
td { height: 16px; padding: 0 1px; line-height: 16px; }
td + td { border-left: 1px solid #999; }
.selection { display: flex; gap: 3px; height: 40px; padding: 1px; }
.styles { display: flex; height: 76px; }
.stylelist { flex: 1; }
.stylelist label { display: flex; height: 16px; align-items: center; gap: 2px; }
.stylelist span { display: flex; flex: 1; align-items: center; gap: 3px; }
.stylelist em { width: 16px; font-size: 12px; font-weight: 700; color: #176b73; }
.stylelist input {
  appearance: none;
  width: 13px;
  height: 13px;
  margin: 0 0 0 1px;
  border: 1px solid #888;
  background: linear-gradient(135deg, #d5d9dd, #fafafa) content-box #fff;
  padding: 2px;
}
.stylelist input:checked { position: relative; }
.stylelist input:checked::after {
  content: "";
  position: absolute;
  left: 4px;
  top: 1px;
  width: 3px;
  height: 6px;
  border: solid #2a4a8d;
  border-width: 0 2px 2px 0;
  transform: rotate(40deg);
}
.rel { align-items: stretch; gap: 3px; }
.rel span { flex: 1; padding-left: 3px; line-height: 22px; }
.row .w48 { flex: 0 0 47px; }
.row .w32 { flex: 0 0 30px; }
.row .x { font-size: 13px; font-weight: 700; color: #666; }
.relbox { height: 38px; }
.foot { height: 22px; }
.row .w102 { flex: 0 0 102px; }
.row .w82 { flex: 0 0 81px; }
.row .last { margin-left: auto; }

.status {
  display: flex;
  gap: 3px;
  height: 24px;
  padding: 2px 1px;
  line-height: 20px;
}
.status div { display: flex; gap: 2px; background: #b8cfe5; white-space: nowrap; }
.s-lat { flex: 0 0 97px; }
.s-lon { flex: 0 0 103px; }
.s-ang { flex: 0 0 68px; }
.s-dist { flex: 0 0 84px; }
.s-obj { flex: 0 0 145px; }
.status p { flex: 1; min-width: 0; padding-left: 2px; border: 1px solid #bbb; overflow: hidden; white-space: nowrap; line-height: 18px; }
```
